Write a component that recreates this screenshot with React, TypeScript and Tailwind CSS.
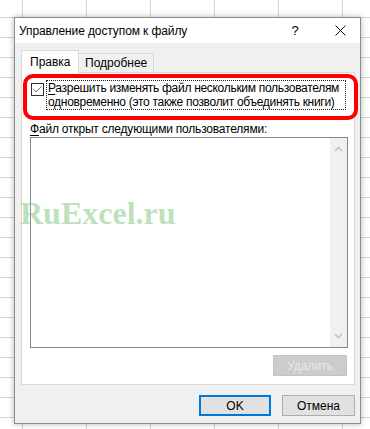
import { Check } from 'lucide-react';

const font = { fontFamily: '"Liberation Sans", Arial, sans-serif' };

const Chevron = ({ up }: { up?: boolean }) => (
  <svg width="9" height="6" viewBox="0 0 9 6" className="block">
    <polyline
      points={up ? '1,5 4.5,1.5 8,5' : '1,1 4.5,4.5 8,1'}
      fill="none"
      stroke="#c2c2c2"
      strokeWidth="1.6"
    />
  </svg>
);

export default function App() {
  return (
    <div
      className="relative w-[370px] h-[429px] overflow-hidden bg-white bg-[linear-gradient(to_right,#d4d4d4_1px,transparent_1px),linear-gradient(to_bottom,#d4d4d4_1px,transparent_1px)] bg-[size:64px_20px] bg-[position:22px_17px] pt-[17px] pl-[14px] text-[12px] text-black"
      style={font}
    >
      {/* Dialog */}
      <div className="w-[347px] h-[407px] border border-[#8c8c8c] bg-[#f0f0f0] shadow-[0_0_6px_rgba(0,0,0,0.3)] flex flex-col">
        {/* Title bar */}
        <div className="h-[25px] bg-white flex items-center pl-[4px]">
          <span className="flex-1 leading-none pt-[1px] tracking-[-0.1px]">Управление доступом к файлу</span>
          <span className="w-[50px] text-center text-[13px] leading-none">?</span>
          <span className="w-[40px] flex justify-center">
            <svg width="11" height="11" viewBox="0 0 11 11">
              <path d="M0.5 0.5 L10.5 10.5 M10.5 0.5 L0.5 10.5" stroke="#111" strokeWidth="1" />
            </svg>
          </span>
        </div>

        {/* Body */}
        <div className="px-[6px] pt-[7px] flex flex-col">
          {/* Tabs */}
          <div className="flex items-end h-[23px] -mb-px">
            <div className="relative z-10 h-[23px] w-[58px] border border-b-0 border-[#d9d9d9] bg-white pl-[8px] pt-[4px] leading-[14px]">
              Правка
            </div>
            <div className="h-[20px] w-[75px] border-t border-r border-[#d9d9d9] bg-[#f0f0f0] pl-[6px] pt-[2px] leading-[14px]">
              Подробнее
            </div>
          </div>

          {/* Panel */}
          <div className="h-[313px] w-[334px] border border-[#d9d9d9] bg-white flex flex-col pl-[8px] pt-[7px]">
            <div className="flex items-start">
              <div className="ml-[1px] mt-[3px] w-[13px] h-[13px] border border-[#333] bg-white flex items-center justify-center">
                <Check size={11} strokeWidth={1.6} color="#1e2b45" />
              </div>
              <div className="ml-[2px] w-[300px] border border-dotted border-[#222] px-[1px] leading-[14px] whitespace-nowrap tracking-[-0.3px] overflow-hidden">
                <div>
                  <span className="underline underline-offset-2">Р</span>азрешить изменять файл нескольким пользователям
                </div>
                <div>одновременно (это также позволит объединять книги)</div>
              </div>
            </div>

            <div className="mt-[12px] leading-[14px] whitespace-nowrap tracking-[-0.2px]">
              <span className="underline underline-offset-2">Ф</span>айл открыт следующими пользователями:
            </div>

            <div className="mt-[1px] w-[318px] h-[211px] border border-[#828790] bg-white flex justify-end">
              <div className="w-[17px] h-full bg-[#f0f0f0] flex flex-col items-center justify-between py-[8px]">
                <Chevron up />
                <Chevron />
              </div>
            </div>

            <div className="w-[318px] flex justify-end mt-[7px]">
              <div className="mr-[1px] w-[74px] h-[21px] bg-[#cccccc] border border-[#c4c4c4] flex items-center justify-center text-[#e9e9e9]">
                Удалить
              </div>
            </div>
          </div>

          {/* Footer */}
          <div className="w-[334px] flex justify-end gap-[11px] mt-[10px]">
            <div className="w-[72px] h-[21px] bg-[#e1e1e1] border-2 border-[#0078d7] flex items-center justify-center">
              OK
            </div>
            <div className="w-[73px] h-[21px] bg-[#e1e1e1] border border-[#adadad] flex items-center justify-center">
              Отмена
            </div>
          </div>
        </div>
      </div>

      {/* Highlight annotation */}
      <div className="absolute left-[23px] top-[74px] w-[335px] h-[46px] border-[4px] border-[#ff0000] rounded-[10px]" />

      {/* Watermark */}
      <div
        className="absolute left-[20px] top-[197px] text-[32px] font-bold leading-none text-[#7cc47c]/50 pointer-events-none"
        style={{ fontFamily: '"Liberation Serif", "Times New Roman", serif' }}
      >
        RuExcel.ru
      </div>
    </div>
  );
}
